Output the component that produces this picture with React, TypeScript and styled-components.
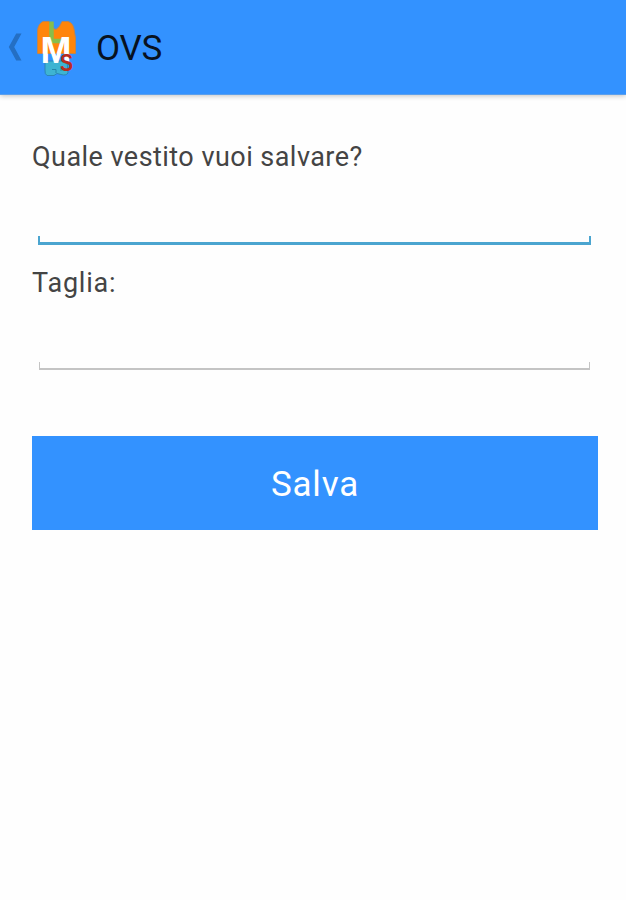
import React from "react";
import styled, { createGlobalStyle } from "styled-components";

const GlobalStyle = createGlobalStyle`
  *, *::before, *::after { box-sizing: border-box; }
  body { margin: 0; background: #fefefe; font-family: Roboto, sans-serif; }
`;

const Screen = styled.div`
  display: flex;
  flex-direction: column;
  height: 900px;
  overflow: hidden;
`;

const ActionBar = styled.header`
  display: flex;
  align-items: center;
  flex: none;
  height: 95px;
  padding-left: 8px;
  background: #3392ff;
  border-bottom: 1px solid #5b9fec;
  box-shadow: 0 1px 5px rgba(0, 0, 0, 0.24);
`;

const BackIcon = styled.svg`
  width: 14px;
  height: 28px;
  flex: none;
`;

const Logo = styled.svg`
  width: 44px;
  height: 60px;
  margin: 0 0 0 12px;
  flex: none;
`;

const Title = styled.h1`
  margin: 3px 0 0 18px;
  font-size: 35px;
  line-height: 42px;
  font-weight: 400;
  letter-spacing: -0.2px;
  color: #08121f;
`;

const Form = styled.form`
  display: flex;
  flex-direction: column;
  padding: 46px 28px 0 32px;
`;

const Label = styled.label<{ $spacing: number }>`
  height: 32px;
  font-size: 27px;
  line-height: 33px;
  letter-spacing: ${(p) => p.$spacing}px;
  color: #444;
`;

const Field = styled.div<{ $active?: boolean }>`
  display: flex;
  flex-direction: column;
  justify-content: flex-end;
  height: ${(p) => (p.$active ? 72 : 71)}px;
  margin: 0 ${(p) => (p.$active ? "7px 22px 6px" : "8px 66px 7px")};
  input {
    width: 100%;
    height: 62px;
    border: 0;
    outline: 0;
    padding: 0 10px;
    background: transparent;
    font: 400 27px/32px Roboto, sans-serif;
    color: #222;
  }
`;

const Bracket = styled.div<{ $active?: boolean }>`
  flex: none;
  height: ${(p) => (p.$active ? 9 : 8)}px;
  border: solid ${(p) => (p.$active ? "#4ba5d0" : "#c4c4c4")};
  border-width: ${(p) => (p.$active ? "0 2px 3px" : "0 1px 2px")};
`;

const SaveButton = styled.button`
  height: 94px;
  border: 0;
  padding: 4px 0 0;
  background: #3392ff;
  color: #fff;
  font: 400 35px/42px Roboto, sans-serif;
  letter-spacing: 0.8px;
`;

export default function App() {
  return (
    <Screen>
      <GlobalStyle />
      <ActionBar>
        <BackIcon viewBox="0 0 14 28" aria-label="Indietro">
          <path d="M13.5 0.5 L8.2 0.5 L0.8 14 L8.2 27.5 L13.5 27.5 L6.2 14 Z" fill="#246fc4" />
        </BackIcon>
        <Logo viewBox="0 0 44 60" aria-label="LMS">
          <path
            d="M11 44 L33 44 L34 56 Q32 59 27 57.5 L23 56.5 L20 58.5 L13 58.5 Q10.5 57 11 53 Z"
            fill="#3eb4d2"
            stroke="#2b86b6"
            strokeWidth="1"
          />
          <path d="M18 52.5 H22 V56 M27 51 V54" fill="none" stroke="#2587aa" strokeWidth="1" />
          <path
            d="M9 4.5 L15 4.5 Q18 12 22 12.5 Q26 10 28 4.5 L34 4.5 Q39 6 40 12 L41.5 21 L41.5 36.5 L3.5 36.5 L3.5 14 Q4 7 9 4.5 Z"
            fill="#ff850b"
            stroke="#bf854f"
            strokeWidth="1"
          />
          <path d="M17.5 4.5 V24 H28" fill="none" stroke="#87bd4c" strokeWidth="4.5" />
          <text x="6.5" y="46" fontFamily="Liberation Sans, sans-serif" fontWeight="700" fontSize="37" textLength="31" lengthAdjust="spacingAndGlyphs" fill="#fff">M</text>
          <text x="26" y="54" fontFamily="Liberation Sans, sans-serif" fontWeight="700" fontSize="23" textLength="13" lengthAdjust="spacingAndGlyphs" fill="#b92b20">S</text>
        </Logo>
        <Title>OVS</Title>
      </ActionBar>
      <Form onSubmit={(e) => e.preventDefault()}>
        <Label $spacing={0.46} htmlFor="dress">Quale vestito vuoi salvare?</Label>
        <Field $active>
          <input id="dress" />
          <Bracket $active />
        </Field>
        <Label $spacing={0.8} htmlFor="size">Taglia:</Label>
        <Field>
          <input id="size" />
          <Bracket />
        </Field>
        <SaveButton>Salva</SaveButton>
      </Form>
    </Screen>
  );
}
